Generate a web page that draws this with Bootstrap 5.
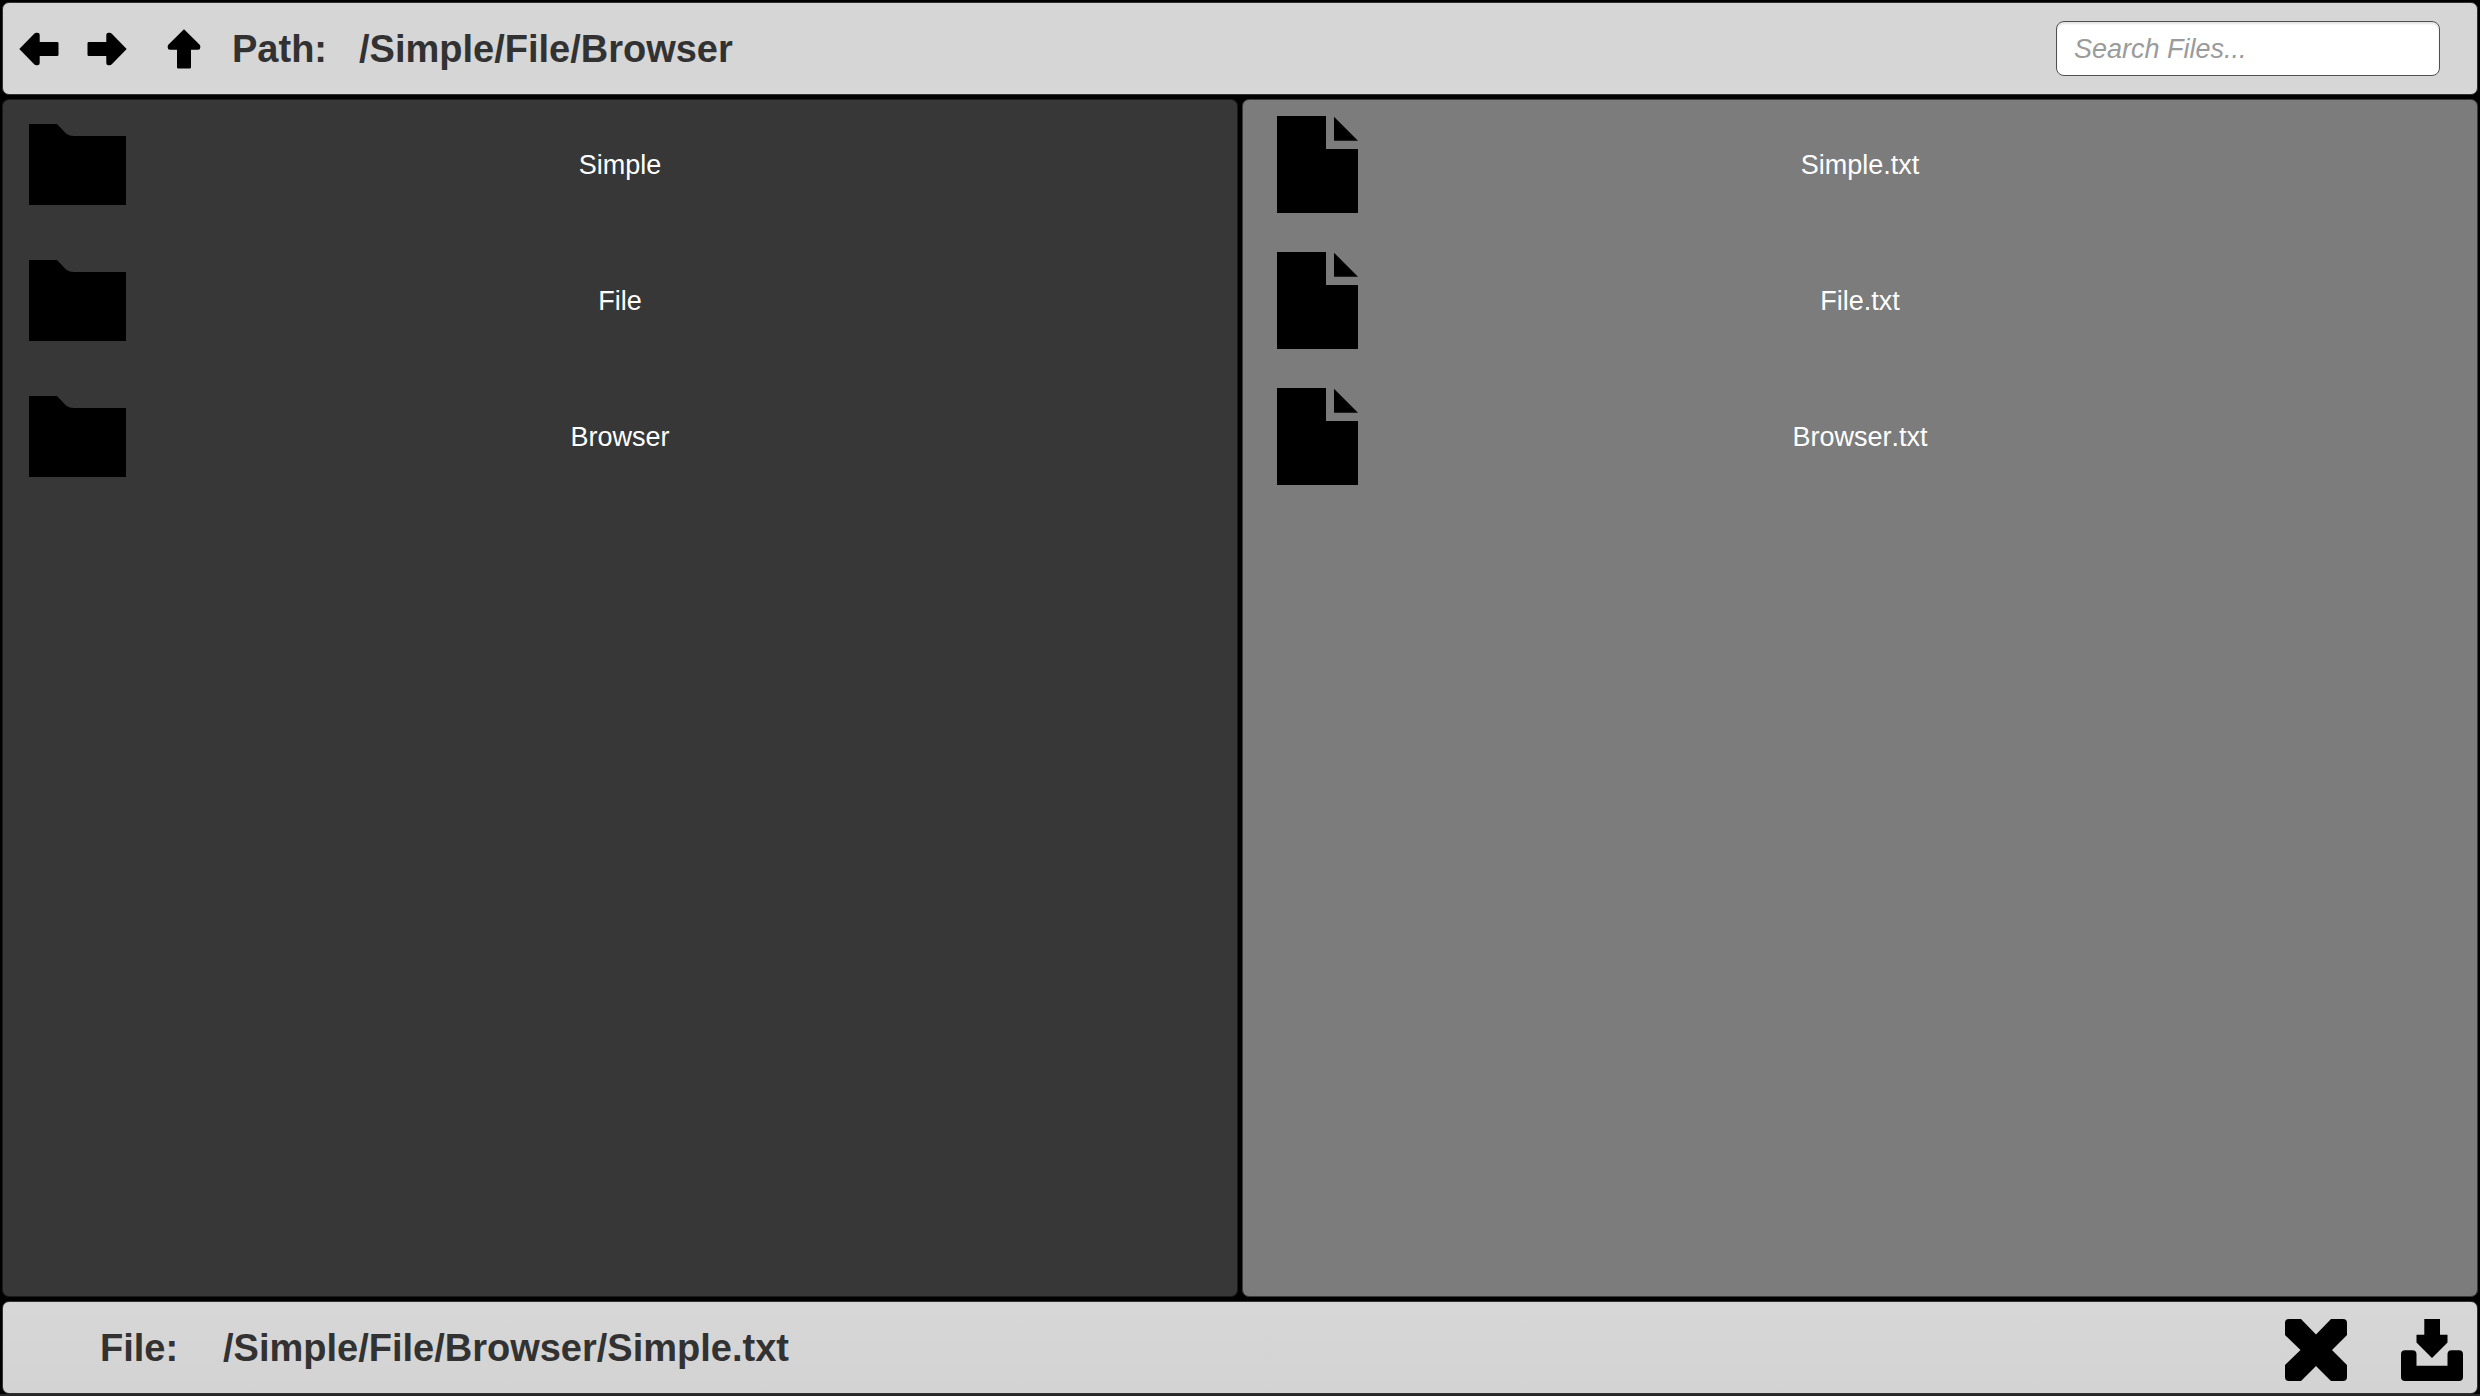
<!DOCTYPE html>
<html lang="en">
<head>
<meta charset="utf-8">
<meta name="viewport" content="width=device-width, initial-scale=1">
<title>Simple File Browser</title>
<link href="https://cdn.jsdelivr.net/npm/bootstrap@5.3.0/dist/css/bootstrap.min.css" rel="stylesheet">
<style>
  body { background: #000; font-family: "Liberation Sans", Arial, sans-serif; font-kerning: none; }
  .browser-shell { padding: 2px 2px 0; gap: 4px; border-bottom: 2px solid #262626; }
  .tool-strip {
    height: 93px; border: 1px solid #323232; border-radius: 7px;
    background: #d6d6d6; color: #323232; font-size: 38px; line-height: 44px;
  }
  .strip-top { padding: 0 37px 0 16px; }
  .strip-bottom { padding: 0 14px 0 97px; background: linear-gradient(#d7d7d7, #d3d3d3); }
  .nav-set { gap: 28px; }
  .up-btn { margin-left: 9px; }
  .path-set { margin-left: 28px; }
  .path-label { width: 127px; }
  .file-label { width: 123px; }
  .icon-btn { padding: 0; border: 0; color: #000; line-height: 0; border-radius: 0; }
  .search-box {
    width: 384px; height: 55px; padding: 2px 17px 0; border: 1px solid #505050; border-radius: 8px;
    background: #fff; font-size: 27px; color: #323232; box-shadow: inset 0 2px 2px #e4e4e4;
    font-kerning: none;
  }
  .search-box::placeholder { color: #9b9b9b; font-style: italic; opacity: 1; }
  .pane-row { gap: 4px; }
  .file-pane { flex: 1 1 0; padding: 16px 26px; gap: 39px; border: 1px solid; border-radius: 7px; }
  .pane-dark { background: #373737; border-color: #1a1a1a; }
  .pane-light { background: #7c7c7c; border-color: #3a3a3a; }
  .entry-btn { padding: 0 97px 0 0; border: 0; border-radius: 0; background: none; color: #fff; font-size: 27px; line-height: 32px; font-kerning: none; }
  .entry-btn:hover { color: #fff; }
  .action-set { gap: 54px; padding-top: 4px; }
</style>
</head>
<body>
<svg class="d-none" xmlns="http://www.w3.org/2000/svg">
  <symbol id="arrow" viewBox="0 0 40 40"><path d="M.3 20 15.2 4.800Q16.200 3.700 17.500 3.700H18.500Q20.700 3.700 20.700 6V13H38.200Q39.500 13 39.500 14.300V25.700Q39.500 27 38.200 27H20.700V34Q20.700 36.300 18.500 36.300H17.500Q16.200 36.300 15.200 35.200Z"/></symbol>
  <symbol id="folder" viewBox="0 0 97 97"><path d="M0 8H28L37 17.500Q40.500 20 45 20H97V89H0Z"/></symbol>
  <symbol id="doc" viewBox="0 0 97 97"><path d="M8 0H57V33H89V97H8ZM65 .7 89 24.700H65Z"/></symbol>
  <symbol id="cross" viewBox="0 0 62 62"><path d="M4 0H16L31 15.500 46 0H58Q62 0 62 4V16L47 31 62 46V58Q62 62 58 62H46L31 47 16 62H4Q0 62 0 58V46L15.500 31 0 16V4Q0 0 4 0Z"/></symbol>
  <symbol id="save" viewBox="0 0 62 62"><path d="M23.300 0H39V15.700H46.500V23.500L31 39 15.500 23.500V15.700H23.300ZM4 31.300H11.500Q15.500 31.300 15.500 35.300V46.700H46.500V35.300Q46.500 31.300 50.500 31.300H58Q62 31.300 62 35.300V58Q62 62 58 62H4Q0 62 0 58V35.300Q0 31.300 4 31.300Z"/></symbol>
</svg>

<div class="browser-shell d-flex flex-column vh-100">
  <header class="tool-strip strip-top d-flex align-items-center">
    <nav class="nav-set d-flex" aria-label="History">
      <button type="button" class="btn icon-btn" aria-label="Back"><svg width="40" height="40" fill="currentColor"><use href="#arrow"/></svg></button>
      <button type="button" class="btn icon-btn" aria-label="Forward"><svg width="40" height="40" viewBox="0 0 40 40" fill="currentColor"><g transform="rotate(180 20 20)"><use href="#arrow" width="40" height="40"/></g></svg></button>
      <button type="button" class="btn icon-btn up-btn" aria-label="Up"><svg width="40" height="40" viewBox="0 0 40 40" fill="currentColor"><g transform="rotate(90 20 20)"><use href="#arrow" width="40" height="40"/></g></svg></button>
    </nav>
    <div class="path-set d-flex fw-bold">
      <span class="path-label">Path:</span>
      <span>/Simple/File/Browser</span>
    </div>
    <input type="search" class="search-box ms-auto" placeholder="Search Files..." aria-label="Search Files">
  </header>

  <main class="pane-row d-flex flex-grow-1">
    <section class="file-pane pane-dark d-flex flex-column" aria-label="Folders">
      <button type="button" class="btn entry-btn d-flex align-items-center"><svg width="97" height="97" fill="#000"><use href="#folder"/></svg><span class="flex-grow-1">Simple</span></button>
      <button type="button" class="btn entry-btn d-flex align-items-center"><svg width="97" height="97" fill="#000"><use href="#folder"/></svg><span class="flex-grow-1">File</span></button>
      <button type="button" class="btn entry-btn d-flex align-items-center"><svg width="97" height="97" fill="#000"><use href="#folder"/></svg><span class="flex-grow-1">Browser</span></button>
    </section>
    <section class="file-pane pane-light d-flex flex-column" aria-label="Files">
      <button type="button" class="btn entry-btn d-flex align-items-center"><svg width="97" height="97" fill="#000"><use href="#doc"/></svg><span class="flex-grow-1">Simple.txt</span></button>
      <button type="button" class="btn entry-btn d-flex align-items-center"><svg width="97" height="97" fill="#000"><use href="#doc"/></svg><span class="flex-grow-1">File.txt</span></button>
      <button type="button" class="btn entry-btn d-flex align-items-center"><svg width="97" height="97" fill="#000"><use href="#doc"/></svg><span class="flex-grow-1">Browser.txt</span></button>
    </section>
  </main>

  <footer class="tool-strip strip-bottom d-flex align-items-center">
    <div class="d-flex fw-bold">
      <span class="file-label">File:</span>
      <span>/Simple/File/Browser/Simple.txt</span>
    </div>
    <div class="action-set d-flex ms-auto">
      <button type="button" class="btn icon-btn" aria-label="Cancel"><svg width="62" height="62" fill="currentColor"><use href="#cross"/></svg></button>
      <button type="button" class="btn icon-btn" aria-label="Save"><svg width="62" height="62" fill="currentColor"><use href="#save"/></svg></button>
    </div>
  </footer>
</div>
<script src="https://cdn.jsdelivr.net/npm/bootstrap@5.3.0/dist/js/bootstrap.bundle.min.js"></script>
</body>
</html>
